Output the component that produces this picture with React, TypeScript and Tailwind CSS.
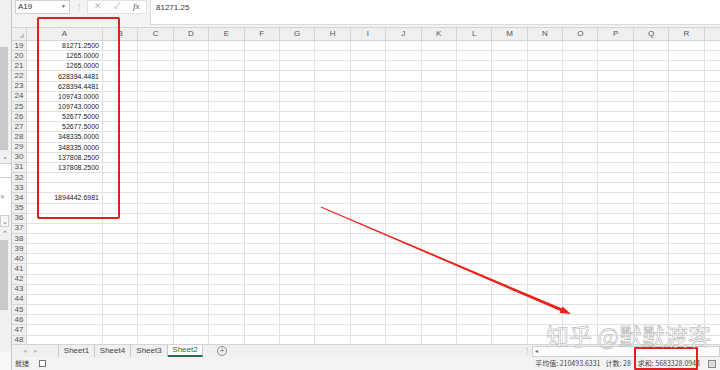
import React from "react";

const vals: Record<number, string> = {
  19: "81271.2500",
  20: "1265.0000",
  21: "1265.0000",
  22: "628394.4481",
  23: "628394.4481",
  24: "109743.0000",
  25: "109743.0000",
  26: "52677.5000",
  27: "52677.5000",
  28: "348335.0000",
  29: "348335.0000",
  30: "137808.2500",
  31: "137808.2500",
  34: "1894442.6981",
};

const cols = ["B", "C", "D", "E", "F", "G", "H", "I", "J", "K", "L", "M", "N", "O", "P", "Q", "R", ""];
const rows = Array.from({ length: 30 }, (_, i) => 19 + i);

export default function App() {
  return (
    <div className="relative w-[720px] h-[370px] overflow-hidden bg-[#f3f3f3] font-['Liberation_Sans','Noto_Sans_CJK_SC',sans-serif] text-[#333]">
      <div className="flex h-full">
        {/* left strip (edge of another window) */}
        <div className="w-[12px] h-full flex flex-col border-r border-[#c9c9c9] bg-[#f0f0f0] text-[7px] text-[#666] leading-none">
          <div className="h-[47px]" />
          <div className="h-[103px] w-[8px] bg-[#c9c9c9]" />
          <div className="h-[13px] w-[9px] flex items-center justify-center">⌄</div>
          <div className="h-[15px] bg-white border-y border-[#cfcfcf]" />
          <div className="h-[37px] bg-white flex items-center">
            <span className="text-[8px] text-[#888]">×</span>
          </div>
          <div className="h-[12px] w-[9px] flex items-center justify-center border border-[#cfcfcf] bg-[#f7f7f7]">⌄</div>
          <div className="h-[13px] w-[9px] flex items-center justify-center">⌃</div>
          <div className="h-[70px] w-[8px] bg-[#c9c9c9]" />
          <div className="flex-1" />
          <div className="h-[18px] bg-[#f7f7f7]" />
        </div>

        {/* main */}
        <div className="flex-1 flex flex-col min-w-0">
          {/* formula bar */}
          <div className="h-[27px] flex items-start shrink-0 bg-[#f3f3f3]">
            <div className="ml-[3px] w-[55px] h-[14px] bg-white border border-[#d2d2d2] flex items-center justify-between pl-[2px] pr-[3px] text-[8px] text-[#333]">
              <span>A19</span>
              <span className="text-[5px] text-[#666]">▼</span>
            </div>
            <div className="w-[17px] h-[14px] flex items-center justify-center text-[8px] text-[#aaa]">⋮</div>
            <div className="w-[60px] h-[14px] bg-white border border-[#e2e2e2] flex items-center text-[9px] text-[#bbb]">
              <span className="w-[20px] text-center">✕</span>
              <span className="w-[20px] text-center">✓</span>
              <span className="w-[20px] text-center italic font-['Liberation_Serif',serif] text-[9px] text-[#555]">fx</span>
            </div>
            <div className="ml-[3px] flex-1 h-[25px] bg-white border-l border-b border-[#dadada] pl-[5px] pt-[2px] text-[8px] text-[#333]">
              81271.25
            </div>
          </div>

          {/* column headers */}
          <div className="h-[14px] flex shrink-0 bg-[#efefef] border-y border-[#d4d4d4] text-[8px] text-[#555]">
            <div className="w-[15px] shrink-0 border-r border-[#d4d4d4] relative">
              <div className="absolute right-[2px] bottom-[2px] w-0 h-0 border-l-[5px] border-l-transparent border-b-[5px] border-b-[#c4c4c4]" />
            </div>
            <div className="w-[76px] shrink-0 border-r border-[#d4d4d4] flex items-center justify-center">A</div>
            {cols.map((c, i) => (
              <div key={i} className="w-[35.4px] shrink-0 border-r border-[#d4d4d4] flex items-center justify-center">
                {c}
              </div>
            ))}
          </div>

          {/* rows */}
          <div className="flex-1 overflow-hidden bg-white">
            {rows.map((r) => (
              <div key={r} className="h-[10.17px] flex">
                <div className="w-[15px] shrink-0 bg-[#efefef] border-r border-b border-[#d8d8d8] flex items-center justify-center text-[8px] leading-none text-[#555]">
                  {r}
                </div>
                <div className="w-[76px] shrink-0 border-r border-b border-[#e1e1e1] flex items-center justify-end pr-[3px] text-[7px] leading-none text-[#222]">
                  {vals[r] ?? ""}
                </div>
                {cols.map((c, i) => (
                  <div key={i} className="w-[35.4px] shrink-0 border-r border-b border-[#e1e1e1]" />
                ))}
              </div>
            ))}
          </div>

          {/* sheet tabs */}
          <div className="h-[13px] shrink-0 flex items-center bg-[#f0f0f0] border-t border-[#d4d4d4] text-[8px] text-[#444]">
            <div className="w-[46px] flex items-center text-[7px] text-[#c0c0c0]">
              <span className="ml-[11px]">◂</span>
              <span className="ml-[7px]">▸</span>
            </div>
            <div className="h-full flex items-center border-l border-[#c8c8c8]">
              <div className="w-[36px] h-full flex items-center justify-center border-r border-[#c8c8c8]">Sheet1</div>
              <div className="w-[36px] h-full flex items-center justify-center border-r border-[#c8c8c8]">Sheet4</div>
              <div className="w-[37px] h-full flex items-center justify-center border-r border-[#c8c8c8]">Sheet3</div>
              <div className="w-[35px] h-full flex items-center justify-center bg-white text-[#217346] border-b-2 border-[#217346] border-r border-r-[#c8c8c8]">
                Sheet2
              </div>
            </div>
            <div className="ml-[14px] w-[10px] h-[10px] rounded-full border border-[#888] flex items-center justify-center text-[8px] leading-none text-[#666]">
              +
            </div>
            <div className="flex-1" />
            <div className="w-[10px] text-center text-[7px] text-[#999]">⋮</div>
            <div className="w-[188px] h-[11px] bg-white border border-[#d0d0d0] flex items-center text-[6px] text-[#666]">
              <span className="ml-[2px]">◂</span>
            </div>
          </div>

          {/* status bar */}
          <div className="h-[13px] shrink-0 flex items-center bg-[#f3f3f3] text-[7px] text-[#444] font-['Noto_Sans_CJK_SC','Liberation_Sans',sans-serif] leading-none">
            <span className="ml-[3px]">就绪</span>
            <span className="ml-[10px] w-[7px] h-[7px] border border-[#777] bg-white" />
            <div className="flex-1" />
            <span>平均值: 210493.6331</span>
            <span className="ml-[5px]">计数: 28</span>
            <span className="ml-[7px]">求和: 5683328.0943</span>
            <span className="ml-[8px] mr-[4px] w-[8px] h-[8px] border border-[#888] bg-[#ddd]" />
          </div>
        </div>
      </div>

      {/* red box around column A */}
      <div className="absolute left-[37px] top-[17px] w-[83px] h-[202px] border-2 border-[#e02020] rounded-[2px]" />
      {/* red box around sum */}
      <div className="absolute left-[634px] top-[347px] w-[64px] h-[23px] border-2 border-[#e02020] rounded-[1px]" />

      {/* arrow */}
      <svg className="absolute left-0 top-0" width="720" height="370" viewBox="0 0 720 370">
        <polygon
          points="321,206.6 561.6,308.3 562.4,306.5 571,314 559.6,312.9 560.4,311.1 320.8,207.4"
          fill="#e8231b"
        />
      </svg>

      {/* watermark */}
      <div className="absolute left-[546px] top-[324px] text-[23px] leading-none font-['Noto_Sans_CJK_SC',sans-serif] text-white/95 [-webkit-text-stroke:0.5px_#aaaaaa] whitespace-nowrap">
        知乎 @默默渡客
      </div>
    </div>
  );
}
